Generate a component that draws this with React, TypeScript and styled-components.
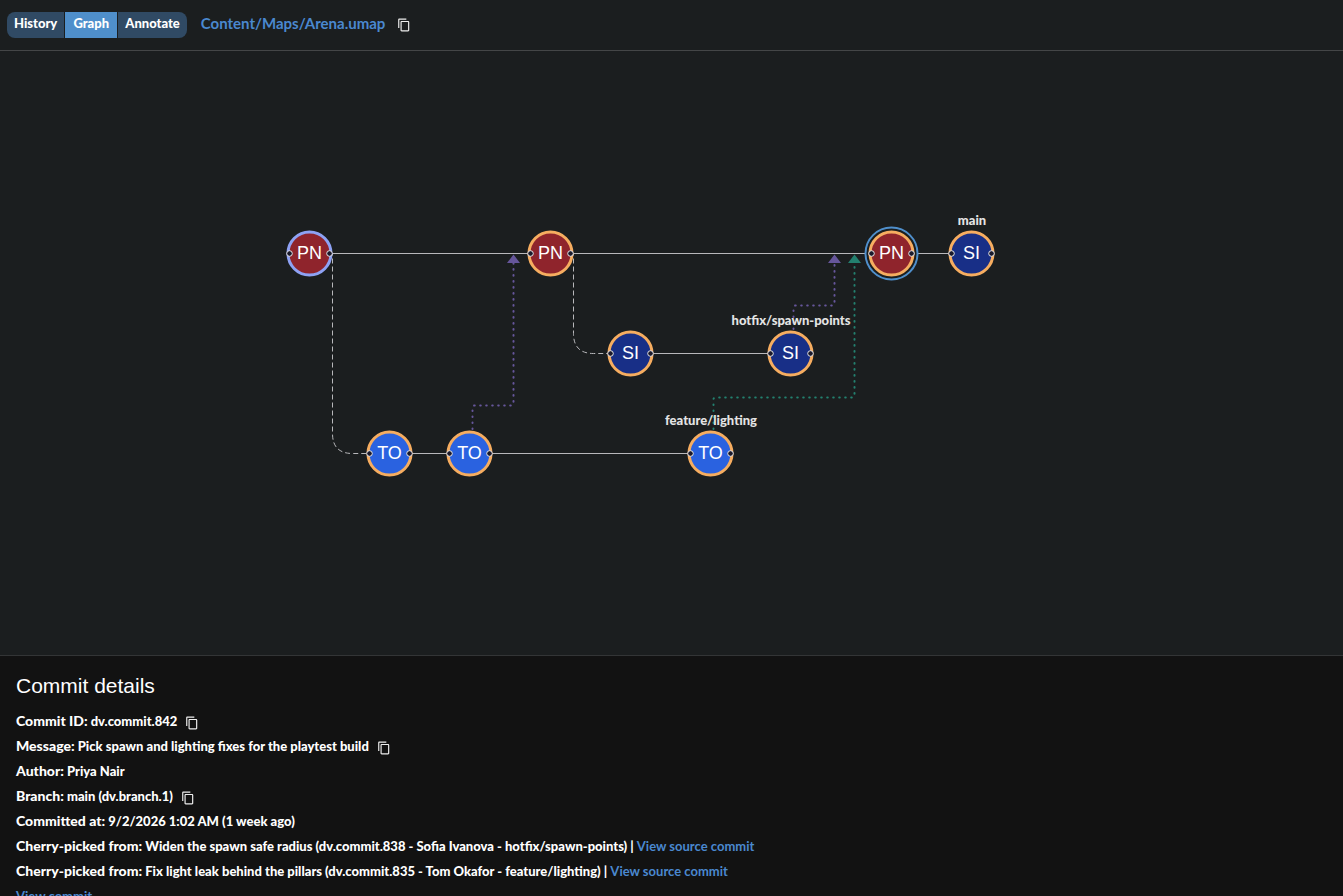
import React from "react";
import styled, { createGlobalStyle } from "styled-components";
import { MdContentCopy } from "react-icons/md";

const GlobalStyle = createGlobalStyle`
  *, *::before, *::after { box-sizing: border-box; }
  body {
    margin: 0;
    background: #1b1e1f;
    color: #fff;
    font-family: Lato, "Liberation Sans", sans-serif;
    font-size: 13px;
  }
`;

const Page = styled.div`
  display: flex;
  flex-direction: column;
  height: 100vh;
`;

const Toolbar = styled.header`
  display: flex;
  align-items: flex-start;
  gap: 14px;
  padding: 12px 7px;
  border-bottom: 1px solid #444647;
`;

const Tabs = styled.nav`
  display: flex;
  gap: 1px;
  border-radius: 8px;
  overflow: hidden;
`;

const Tab = styled.button<{ $active?: boolean }>`
  min-width: 52px;
  height: 26px;
  padding: 0 7px 4px;
  border: 0;
  background: ${(p) => (p.$active ? "#4f8fcb" : "#304a64")};
  color: #fff;
  font: 900 13px Lato, "Liberation Sans", sans-serif;
  cursor: pointer;
`;

const FilePath = styled.div`
  display: flex;
  align-items: center;
  gap: 12px;
  line-height: 22px;
  font-size: 15px;
`;

const Link = styled.a`
  color: #4a88cf;
  font-weight: 700;
  text-decoration: none;
`;

const IconButton = styled.button`
  display: inline-flex;
  padding: 4px 0 0;
  border: 0;
  background: none;
  color: #eee;
  font-size: 14px;
  cursor: pointer;
`;

const Canvas = styled.main`
  position: relative;
  flex: 1;
  min-height: 0;
  overflow: hidden;
`;

const Edges = styled.svg`
  position: absolute;
  inset: 0;
  width: 100%;
  height: 100%;
  fill: none;
`;

const nodeFill = { PN: "#8f242c", SI: "#182f87", TO: "#2a62e0" };
type Initials = keyof typeof nodeFill;

const Node = styled.button<{ $x: number; $y: number }>`
  position: absolute;
  left: ${(p) => p.$x - 23}px;
  top: ${(p) => p.$y - 23}px;
  width: 47px;
  height: 47px;
  padding: 0;
  border: 0;
  border-radius: 50%;
  background: none;
  color: #fff;
  font: 18px "Liberation Sans", Arial, sans-serif;
  cursor: pointer;
`;

const NodeShape = styled.svg`
  position: absolute;
  inset: 0;
  overflow: visible;
`;

const NodeText = styled.span`
  position: relative;
`;

const BranchLabel = styled.span<{ $x: number; $y: number }>`
  position: absolute;
  left: ${(p) => p.$x}px;
  top: ${(p) => p.$y}px;
  transform: translateX(-50%);
  color: #e4e4e4;
  font-weight: 900;
  line-height: 18px;
  white-space: nowrap;
`;

const Details = styled.section`
  flex: 0 0 241px;
  padding: 17px 16px 16px;
  overflow-y: auto;
  scrollbar-width: none;
  border-top: 1px solid #333536;
  background: #121212;
`;

const Title = styled.h2`
  margin: 0 0 9px;
  font: 21px/26px "Liberation Sans", Arial, sans-serif;
`;

const Row = styled.div`
  display: flex;
  align-items: center;
  gap: 8px;
  height: 25px;
  font-weight: 900;
  white-space: nowrap;

  b {
    font-size: 14px;
    font-weight: 900;
  }
`;

const Copy = ({ label }: { label: string }) => (
  <IconButton type="button" aria-label={label}>
    <MdContentCopy />
  </IconButton>
);

type Commit = { x: number; y: number; who: Initials; ring?: string; selected?: boolean };

const CommitNode = ({ x, y, who, ring = "#f6ad60", selected }: Commit) => (
  <Node type="button" $x={x} $y={y}>
    <NodeShape width="47" height="47" aria-hidden="true">
      {selected && <circle cx="23.5" cy="23.5" r="26" fill="#1b1e1f" stroke="#4f8fcb" strokeWidth="2" />}
      <circle cx="23.5" cy="23.5" r="21.5" fill={nodeFill[who]} stroke={ring} strokeWidth="3" />
      <g fill="#1a192b" stroke="#e6e6ea">
        <circle cx="3.5" cy="23.5" r="2.8" />
        <circle cx="43.5" cy="23.5" r="2.8" />
      </g>
    </NodeShape>
    <NodeText>{who}</NodeText>
  </Node>
);

const commits: Commit[] = [
  { x: 309, y: 202, who: "PN", ring: "#8ea2f4" },
  { x: 550, y: 202, who: "PN" },
  { x: 891, y: 202, who: "PN", selected: true },
  { x: 971, y: 202, who: "SI" },
  { x: 630, y: 302, who: "SI" },
  { x: 790, y: 302, who: "SI" },
  { x: 389, y: 402, who: "TO" },
  { x: 469, y: 402, who: "TO" },
  { x: 710, y: 402, who: "TO" },
];

const branches = [
  { x: 972, y: 160, name: "main" },
  { x: 791, y: 260, name: "hotfix/spawn-points" },
  { x: 711, y: 360, name: "feature/lighting" },
];

const picks = [
  "Widen the spawn safe radius (dv.commit.838 - Sofia Ivanova - hotfix/spawn-points)",
  "Fix light leak behind the pillars (dv.commit.835 - Tom Okafor - feature/lighting)",
];

export default function App() {
  return (
    <Page>
      <GlobalStyle />
      <Toolbar>
        <Tabs>
          <Tab type="button">History</Tab>
          <Tab type="button" $active>Graph</Tab>
          <Tab type="button">Annotate</Tab>
        </Tabs>
        <FilePath>
          <Link href="#file">Content/Maps/Arena.umap</Link>
          <Copy label="Copy path" />
        </FilePath>
      </Toolbar>
      <Canvas>
        <Edges aria-hidden="true">
          <g stroke="#b8b8bb">
            <path d="M330 202.5H530M571 202.5H871M912 202.5H951M651 302.5H770M410 402.5H449M490 402.5H690" />
            <g strokeDasharray="5 3">
              <path d="M329.500 202.500H332.500V382.500Q332.500 402.500 352.500 402.500H369.500" />
              <path d="M570.500 202.500H573.500V282.500Q573.500 302.500 593.500 302.500H610.500" />
            </g>
          </g>
          <g strokeWidth="2" strokeLinecap="round" strokeDasharray="0.6 5.4">
            <path stroke="#66569b" d="M472.500 378V356.500Q472.500 354.500 474.500 354.500H511.500Q513.500 354.500 513.500 352.500V212" />
            <path stroke="#66569b" d="M793.500 278V256.500Q793.500 254.500 795.500 254.500H832.500Q834.500 254.500 834.500 252.500V212" />
            <path stroke="#23806f" d="M713.500 378V348.500Q713.500 346.500 715.500 346.500H852.500Q854.500 346.500 854.500 344.500V212" />
          </g>
          <path fill="#66569b" d="M513.500 203.500L520 212H507ZM834.500 203.500L841 212H828Z" />
          <path fill="#23806f" d="M854.500 203.500L861 212H848Z" />
        </Edges>
        {commits.map((c) => (
          <CommitNode key={`${c.x}-${c.y}`} {...c} />
        ))}
        {branches.map((b) => (
          <BranchLabel key={b.name} $x={b.x} $y={b.y}>{b.name}</BranchLabel>
        ))}
      </Canvas>
      <Details>
        <Title>Commit details</Title>
        <Row>
          <span><b>Commit ID:</b> dv.commit.842</span>
          <Copy label="Copy commit ID" />
        </Row>
        <Row>
          <span><b>Message:</b> Pick spawn and lighting fixes for the playtest build</span>
          <Copy label="Copy message" />
        </Row>
        <Row><span><b>Author:</b> Priya Nair</span></Row>
        <Row>
          <span><b>Branch:</b> main (dv.branch.1)</span>
          <Copy label="Copy branch" />
        </Row>
        <Row><span><b>Committed at:</b> 9/2/2026 1:02 AM (1 week ago)</span></Row>
        {picks.map((text) => (
          <Row key={text}>
            <span><b>Cherry-picked from:</b> {text} | <Link href="#source">View source commit</Link></span>
          </Row>
        ))}
        <Row><Link href="#commit">View commit</Link></Row>
      </Details>
    </Page>
  );
}
